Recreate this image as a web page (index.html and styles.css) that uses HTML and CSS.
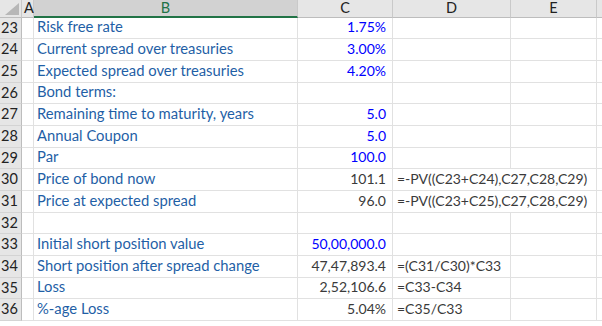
FILE: index.html
```html
<!DOCTYPE html>
<html>
<head>
<meta charset="utf-8">
<link rel="stylesheet" href="styles.css">
</head>
<body>
<div class="sheet">
  <div class="hdr corner"><span class="tri"></span></div>
  <div class="hdr colA">A</div>
  <div class="hdr sel">B</div>
  <div class="hdr">C</div>
  <div class="hdr">D</div>
  <div class="hdr">E</div>
  <div class="hdr last"></div>

  <div class="rh">23</div><div class="c a"></div><div class="c lbl">Risk free rate</div><div class="c num in">1.75%</div><div class="c"></div><div class="c"></div><div class="c f"></div>
  <div class="rh">24</div><div class="c a"></div><div class="c lbl">Current spread over treasuries</div><div class="c num in">3.00%</div><div class="c"></div><div class="c"></div><div class="c f"></div>
  <div class="rh">25</div><div class="c a"></div><div class="c lbl">Expected spread over treasuries</div><div class="c num in">4.20%</div><div class="c"></div><div class="c"></div><div class="c f"></div>
  <div class="rh">26</div><div class="c a"></div><div class="c lbl">Bond terms:</div><div class="c num"></div><div class="c"></div><div class="c"></div><div class="c f"></div>
  <div class="rh">27</div><div class="c a"></div><div class="c lbl">Remaining time to maturity, years</div><div class="c num in">5.0</div><div class="c"></div><div class="c"></div><div class="c f"></div>
  <div class="rh">28</div><div class="c a"></div><div class="c lbl">Annual Coupon</div><div class="c num in">5.0</div><div class="c"></div><div class="c"></div><div class="c f"></div>
  <div class="rh">29</div><div class="c a"></div><div class="c lbl">Par</div><div class="c num in">100.0</div><div class="c"></div><div class="c"></div><div class="c f"></div>
  <div class="rh">30</div><div class="c a"></div><div class="c lbl">Price of bond now</div><div class="c num">101.1</div><div class="c fx spill">=-PV((C23+C24),C27,C28,C29)</div><div class="c"></div><div class="c f"></div>
  <div class="rh">31</div><div class="c a"></div><div class="c lbl">Price at expected spread</div><div class="c num">96.0</div><div class="c fx spill">=-PV((C23+C25),C27,C28,C29)</div><div class="c"></div><div class="c f"></div>
  <div class="rh">32</div><div class="c a"></div><div class="c lbl"></div><div class="c num"></div><div class="c"></div><div class="c"></div><div class="c f"></div>
  <div class="rh">33</div><div class="c a"></div><div class="c lbl">Initial short position value</div><div class="c num in">50,00,000.0</div><div class="c"></div><div class="c"></div><div class="c f"></div>
  <div class="rh">34</div><div class="c a"></div><div class="c lbl">Short position after spread change</div><div class="c num">47,47,893.4</div><div class="c fx">=(C31/C30)*C33</div><div class="c"></div><div class="c f"></div>
  <div class="rh">35</div><div class="c a"></div><div class="c lbl">Loss</div><div class="c num">2,52,106.6</div><div class="c fx">=C33-C34</div><div class="c"></div><div class="c f"></div>
  <div class="rh">36</div><div class="c a"></div><div class="c lbl">%-age Loss</div><div class="c num">5.04%</div><div class="c fx">=C35/C33</div><div class="c"></div><div class="c f"></div>
</div>
</body>
</html>
```

FILE: styles.css
```css
html, body {
  margin: 0;
  padding: 0;
  background: #ffffff;
}
body {
  font-family: Lato, "Liberation Sans", sans-serif;
  font-size: 14px;
  overflow: hidden;
}
.sheet {
  display: grid;
  grid-template-columns: 22px 12px 264px 95px 118px 86px 5px;
  grid-template-rows: 17.5px repeat(14, 21.68px);
  width: 602px;
}
.hdr {
  background: #e6e6e6;
  color: #222222;
  border-right: 1px solid #c9c9c9;
  border-bottom: 1px solid #bdbdbd;
  display: flex;
  align-items: center;
  justify-content: center;
  line-height: 1;
  box-sizing: border-box;
  font-size: 14.5px;
}
.hdr.corner {
  position: relative;
  border-right: 1px solid #c9c9c9;
}
.tri {
  position: absolute;
  right: 2px;
  bottom: 2px;
  width: 0;
  height: 0;
  border-left: 14px solid transparent;
  border-bottom: 12px solid #b7b7b7;
}
.hdr.colA {
  justify-content: flex-start;
  padding-left: 2px;
}
.hdr.sel {
  background: #d2d2d2;
  color: #217346;
  border-bottom: 2px solid #217346;
}
.hdr.last {
  border-right: none;
}
.rh {
  background: #e6e6e6;
  color: #222222;
  border-right: 1px solid #bdbdbd;
  border-bottom: 1px solid #d4d4d4;
  box-sizing: border-box;
  display: flex;
  align-items: flex-end;
  padding: 0 4px 3px 1px;
  line-height: 1;
  font-size: 14.5px;
}
.c {
  border-right: 1px solid #e1e1e1;
  border-bottom: 1px solid #e1e1e1;
  box-sizing: border-box;
  display: flex;
  align-items: flex-end;
  padding: 0 3px 4px 3px;
  line-height: 1;
  white-space: nowrap;
  min-width: 0;
}
.c.f {
  border-right: none;
}
.lbl {
  color: #1f5fa6;
  font-size: 14.8px;
}
.num {
  justify-content: flex-end;
  padding-right: 6px;
  color: #3a3a3a;
}
.num.in {
  color: #0000ff;
}
.fx {
  color: #3a3a3a;
  padding-left: 4px;
  overflow: visible;
}
.fx.spill {
  border-right: none;
}
```
